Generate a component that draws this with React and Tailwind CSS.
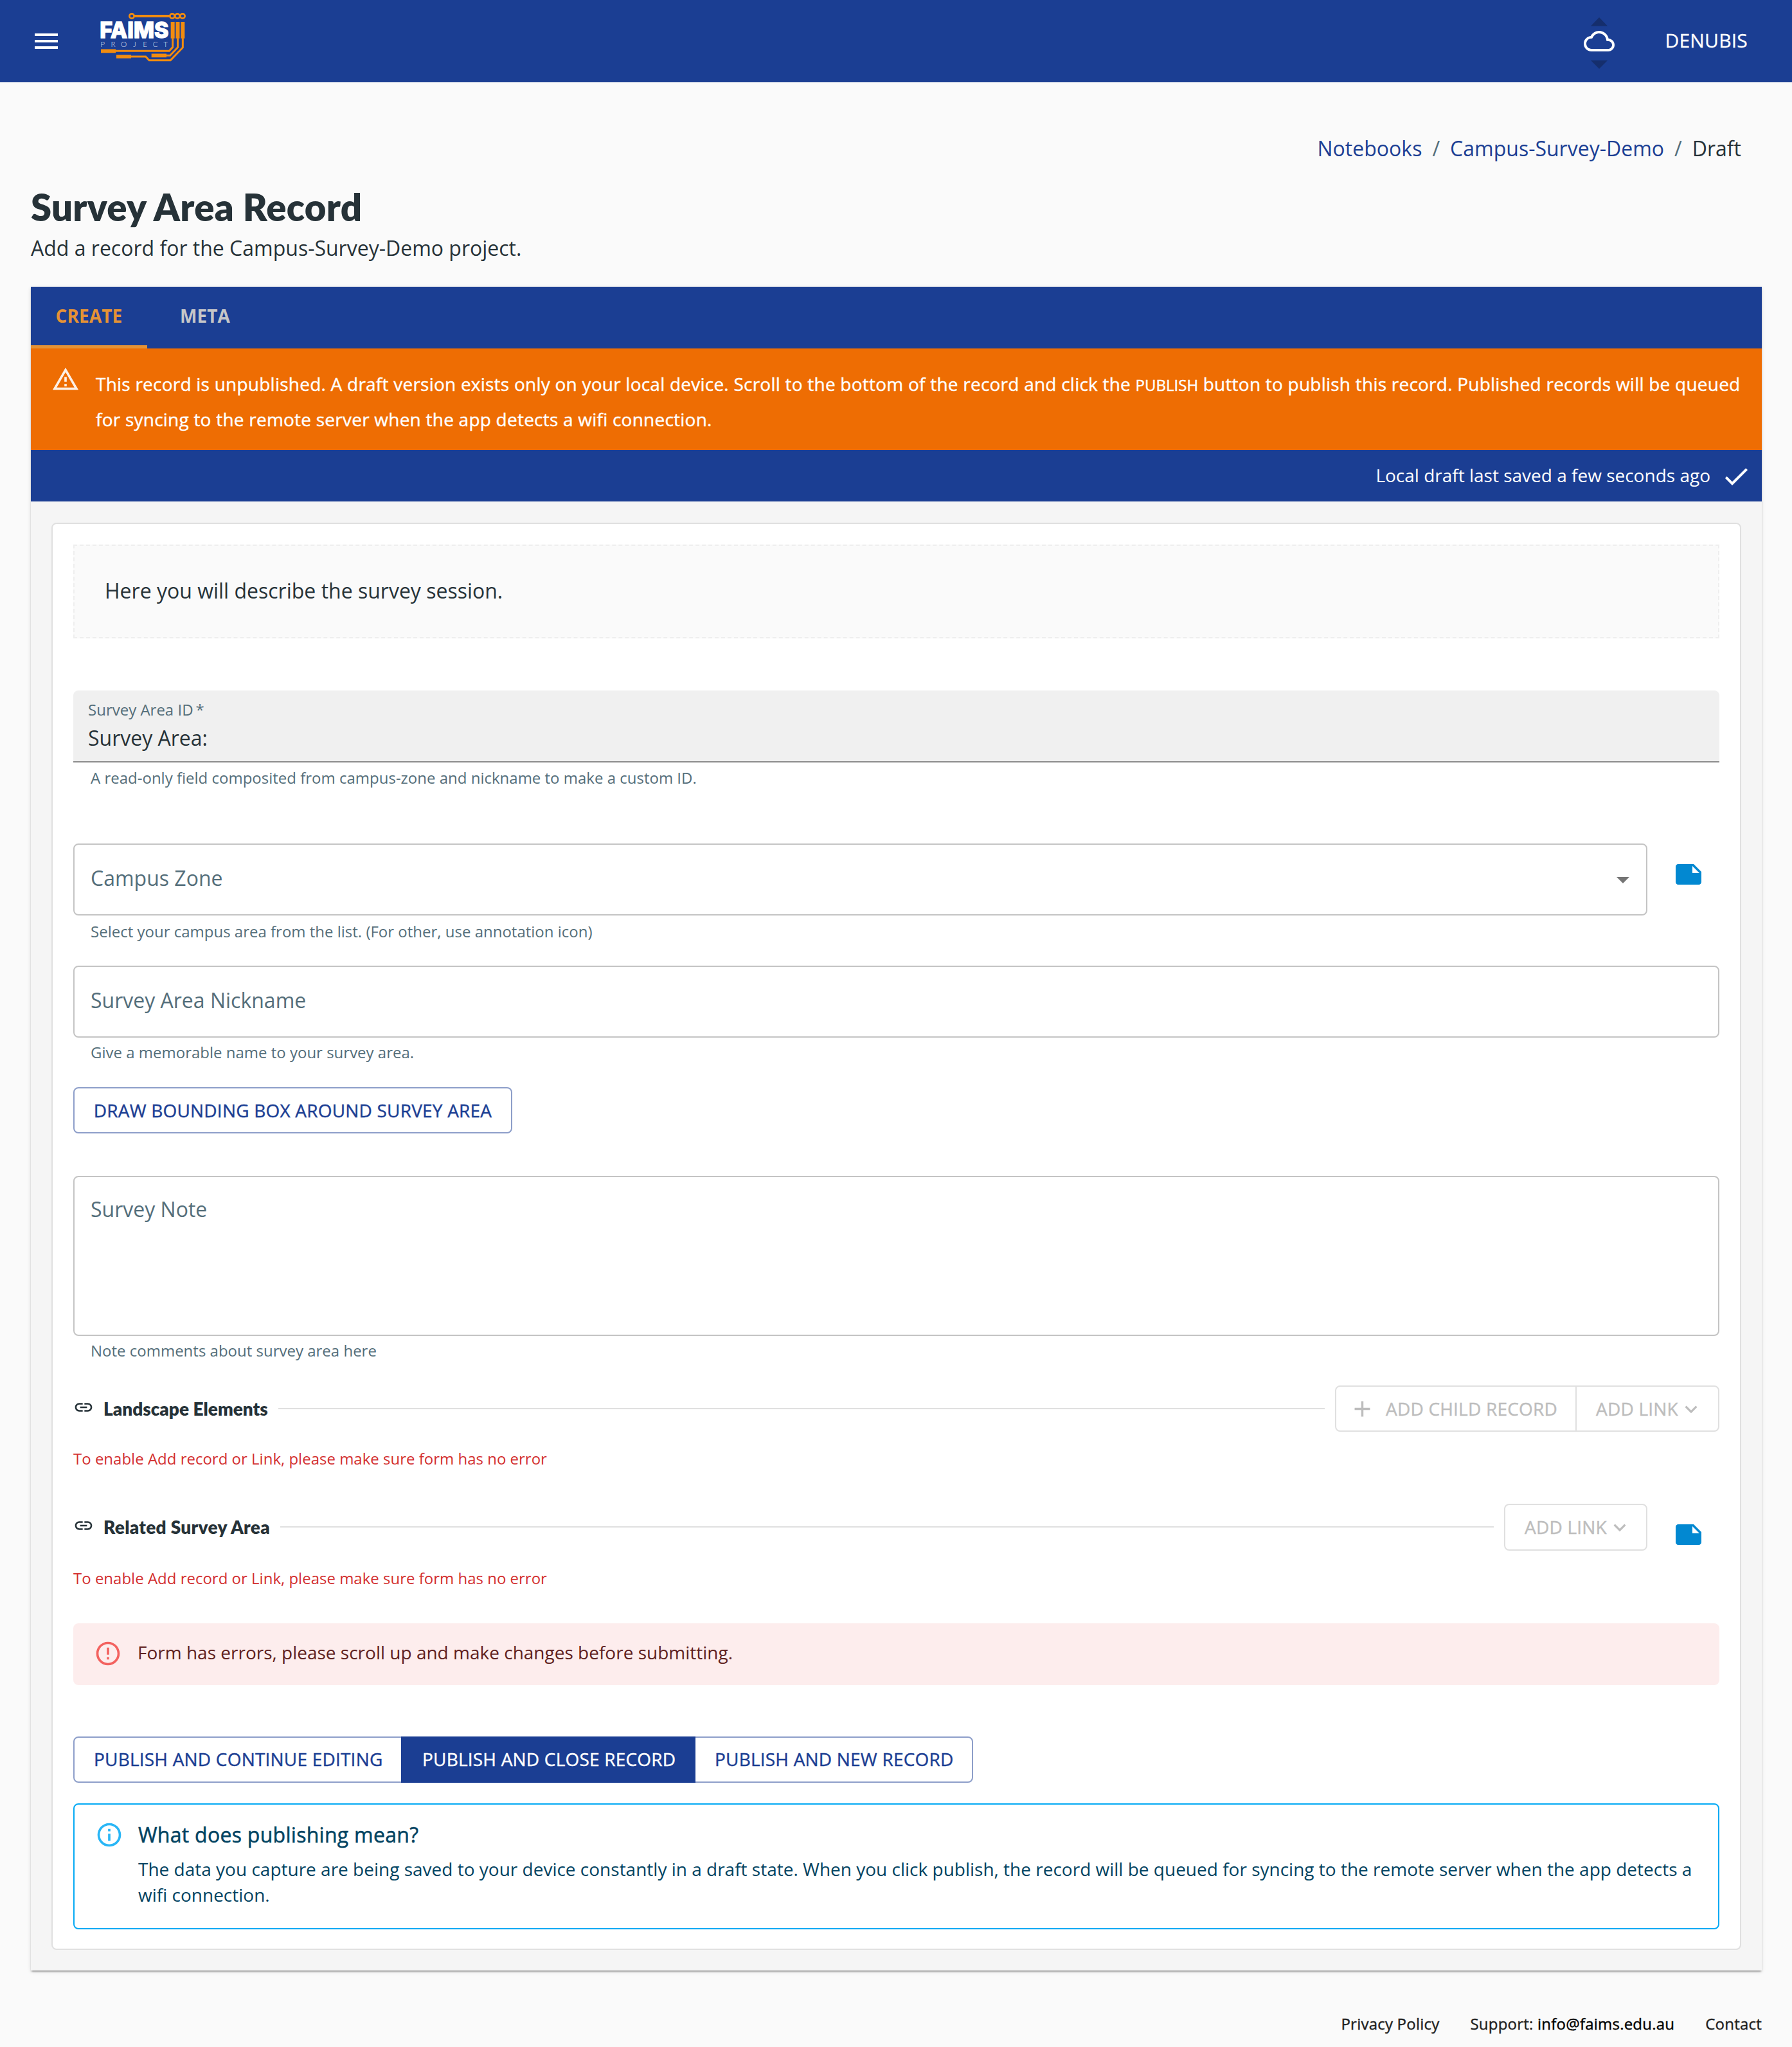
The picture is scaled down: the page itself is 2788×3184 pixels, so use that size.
import React from "react";
import {
  MdMenu,
  MdOutlineReportProblem,
  MdCheck,
  MdNote,
  MdLink,
  MdAdd,
  MdKeyboardArrowDown,
  MdArrowDropDown,
  MdErrorOutline,
  MdInfoOutline,
} from "react-icons/md";

function Logo() {
  return (
    <svg className="block h-[76px] w-[134px]" viewBox="48 30 402 228" fill="none">
      <g stroke="#f28c0f" strokeLinejoin="miter">
        <circle cx="195" cy="45" r="11" strokeWidth="8" />
        <path d="M206 45H373" strokeWidth="12" />
        <circle cx="384" cy="45" r="11" strokeWidth="8" />
        <circle cx="408" cy="45" r="11" strokeWidth="8" />
        <circle cx="432" cy="45" r="11" strokeWidth="8" />
        <path d="M386 72V149M409.5 72V149M433 72V149" strokeWidth="18" />
        <path d="M386 148V190L370 208H119" strokeWidth="9" />
        <path d="M409.5 148V191L374 229H355" strokeWidth="9" />
        <path d="M433 148V192L376 251H276L260 234H190" strokeWidth="9" />
        <path d="M51 208H120M287 229H357M123 234H192" strokeWidth="17" />
      </g>
      <text
        x="46"
        y="148"
        fill="#ffffff"
        stroke="#ffffff"
        strokeWidth="4"
        textLength="321"
        lengthAdjust="spacingAndGlyphs"
        className="font-['Inter'] text-[103px] font-extrabold"
      >
        FAIMS
      </text>
      {["P", "R", "O", "J", "E", "C", "T"].map((letter, i) => (
        <text
          key={letter}
          x={[59, 108, 158, 208, 257, 305, 353][i]}
          y="189"
          fill="#ffffff"
          fillOpacity="0.85"
          textAnchor="middle"
          className="font-['Lato'] text-[35px] font-light"
        >
          {letter}
        </text>
      ))}
    </svg>
  );
}

function SyncStatus() {
  return (
    <svg className="block h-[80px] w-[48px]" viewBox="0 0 48 80">
      <path d="M24 0L37 13.5H11Z" fill="#152e6d" />
      <path d="M24 80L37 67H11Z" fill="#152e6d" />
      <path
        transform="translate(0 13) scale(2)"
        fill="#ffffff"
        d="M19.35 10.04C18.67 6.59 15.64 4 12 4 9.11 4 6.6 5.64 5.35 8.04 2.34 8.36 0 10.91 0 14c0 3.31 2.69 6 6 6h13c2.76 0 5-2.24 5-5 0-2.64-2.05-4.78-4.65-4.96zM19 18H6c-2.21 0-4-1.79-4-4 0-2.05 1.53-3.76 3.56-3.97l1.07-.11.5-.95C8.08 7.14 9.94 6 12 6c2.62 0 4.88 1.86 5.39 4.43l.3 1.5 1.53.11c1.56.1 2.78 1.41 2.78 2.96 0 1.65-1.35 3-3 3z"
      />
    </svg>
  );
}

function Helper({ className, children }) {
  return (
    <p className={`pl-[27px] text-[24px] leading-[40px] text-[#546e7a] ${className}`}>{children}</p>
  );
}

function OutlinedField({ className, children }) {
  return (
    <div
      className={`flex justify-between rounded-[8px] border-2 border-[#c4c4c4] pl-[25px] text-[32px] leading-[46px] text-[#546e7a] ${className}`}
    >
      {children}
    </div>
  );
}

const medium = "[-webkit-text-stroke:0.4px_currentColor] tracking-[0.2px]";

function RelationHeading({ className, children }) {
  return (
    <>
      <MdLink className="mb-[5px] size-[32px] text-[#263238]" />
      <h6
        className={`ml-[15px] mr-[16px] font-['Lato'] text-[28px] font-extrabold leading-[40px] text-[#263238] ${className}`}
      >
        {children}
      </h6>
      <div className="h-[2px] flex-1 bg-[#e0e0e0]" />
    </>
  );
}

function FormError({ className }) {
  return (
    <p className={`text-[24px] leading-[40px] text-[#d32f2f] ${className}`}>
      To enable Add record or Link, please make sure form has no error
    </p>
  );
}

export default function App() {
  return (
    <div className="flex min-h-[3184px] w-[2788px] flex-col bg-[#fafafa] font-['Open_Sans',sans-serif] text-[#263238]">
      <header className="flex h-[128px] items-start bg-[#1b3e93] pl-[48px] pr-[69px] text-white">
        <MdMenu className="mt-[40px] size-[48px]" />
        <div className="ml-[60px] mt-[20px]">
          <Logo />
        </div>
        <div className="ml-auto mt-[27px]">
          <SyncStatus />
        </div>
        <span className="ml-[78px] mt-[38px] text-[30px] leading-[50px] tracking-[0.2px] [-webkit-text-stroke:0.3px_currentColor]">
          DENUBIS
        </span>
      </header>

      <nav className="mt-[79px] flex justify-end pr-[79px] text-[32px] leading-[48px]">
        <a className="text-[#1b3e93]">Notebooks</a>
        <span className="mx-[16px] text-[#546e7a]">/</span>
        <a className="text-[#1b3e93]">Campus-Survey-Demo</a>
        <span className="mx-[16px] text-[#546e7a]">/</span>
        <span>Draft</span>
      </nav>

      <h2 className="mt-[32px] pl-[48px] font-['Lato'] text-[58px] font-extrabold leading-[70px] tracking-[0.3px]">
        Survey Area Record
      </h2>
      <p className="mt-[5px] pl-[48px] text-[32px] leading-[48px]">
        Add a record for the Campus-Survey-Demo project.
      </p>

      <main className="ml-[48px] mr-[47px] mt-[36px] bg-[#f5f5f5] shadow-[0_4px_2px_-2px_rgba(0,0,0,0.2),0_2px_2px_0_rgba(0,0,0,0.14),0_2px_6px_0_rgba(0,0,0,0.12)]">
        <div className="flex h-[96px] bg-[#1b3e93] text-center text-[28px] font-bold leading-[40px] tracking-[0.1px]">
          <div className="w-[181px] border-b-[5px] border-[#e59235] pt-[25px] text-[#e59235]">
            CREATE
          </div>
          <div className="w-[180px] pt-[25px] text-[#c5c6c8]">META</div>
        </div>

        <div className="flex h-[158px] bg-[#ee6d03] pl-[32px] text-white">
          <MdOutlineReportProblem className="mt-[26px] size-[44px] opacity-90" />
          <p className="ml-[25px] mt-[29px] whitespace-nowrap text-[28px] leading-[53.6px] tracking-[0.23px] [-webkit-text-stroke:0.4px_currentColor]">
            This record is unpublished. A draft version exists only on your local device. Scroll to the bottom of the
            record and click the <span className="text-[24px] tracking-[0px]">PUBLISH</span> button to publish this
            record. Published records will be queued
            <br />
            for syncing to the remote server when the app detects a wifi connection.
          </p>
        </div>

        <div className="flex h-[80px] items-start justify-end bg-[#1b3e93] pr-[16px] text-white">
          <span className="mt-[19px] text-[28px] leading-[40px]">Local draft last saved a few seconds ago</span>
          <MdCheck className="ml-[16px] mt-[17px] size-[48px]" />
        </div>

        <div className="px-[32px] pb-[32px] pt-[33px]">
          <section className="h-[2220px] rounded-[8px] border-2 border-[#e0e0e0] bg-white p-[32px]">
            <div className="h-[146px] border-2 border-dashed border-[#eeeeee] bg-[#fafafa] pl-[47px] pt-[46px] text-[32px] leading-[48px]">
              Here you will describe the survey session.
            </div>

            <div className="mt-[81px] h-[112px] rounded-t-[8px] border-b-2 border-[#8c8c8c] bg-[#f0f0f0] pl-[23px]">
              <div className="pt-[10px] text-[24px] leading-[40px] text-[#546e7a]">Survey Area ID&thinsp;*</div>
              <div className="mt-[1px] text-[32px] leading-[46px]">Survey Area:</div>
            </div>
            <Helper className="mt-[4px]">
              A read-only field composited from campus-zone and nickname to make a custom ID.
            </Helper>

            <div className="mt-[82px] flex">
              <OutlinedField className="h-[112px] w-[2449px] pr-[12px] pt-[29px]">
                <span>Campus Zone</span>
                <MdArrowDropDown className="mt-[1px] size-[48px] text-[#757575]" />
              </OutlinedField>
              <MdNote className="ml-[40px] mt-[24px] size-[48px] text-[#0288d1]" />
            </div>
            <Helper className="mt-[5px]">
              Select your campus area from the list. (For other, use annotation icon)
            </Helper>

            <OutlinedField className="mt-[33px] h-[112px] pt-[29px]">Survey Area Nickname</OutlinedField>
            <Helper className="mt-[3px]">Give a memorable name to your survey area.</Helper>

            <button
              className={`mt-[34px] flex h-[72px] w-[683px] items-center justify-center whitespace-nowrap rounded-[8px] border-2 border-[#1b3e93]/50 text-[28px] text-[#1b3e93] ${medium}`}
            >
              DRAW BOUNDING BOX AROUND SURVEY AREA
            </button>

            <OutlinedField className="mt-[66px] h-[249px] pt-[27px]">Survey Note</OutlinedField>
            <Helper className="mt-[3px]">Note comments about survey area here</Helper>

            <div className="mt-[34px] flex h-[72px] items-center">
              <RelationHeading>Landscape Elements</RelationHeading>
              <div
                className={`ml-[16px] flex h-[72px] rounded-[8px] border-2 border-[#e0e0e0] text-[28px] text-[#bdbdbd] ${medium}`}
              >
                <div className="flex w-[374px] items-center border-r-2 border-[#e0e0e0] pl-[20px]">
                  <MdAdd className="size-[41px]" />
                  <span className="ml-[16px] whitespace-nowrap">ADD CHILD RECORD</span>
                </div>
                <div className="flex w-[220px] items-center pl-[30px]">
                  <span className="whitespace-nowrap">ADD LINK</span>
                  <MdKeyboardArrowDown className="ml-px mt-[2px] size-[38px]" />
                </div>
              </div>
            </div>
            <FormError className="mt-[22px]" />

            <div className="mt-[50px] flex h-[72px] items-center">
              <RelationHeading className="tracking-[0.3px]">Related Survey Area</RelationHeading>
              <div
                className={`ml-[16px] flex h-[73px] w-[223px] items-center rounded-[8px] border-2 border-[#e0e0e0] pl-[30px] text-[28px] text-[#bdbdbd] ${medium}`}
              >
                <span className="whitespace-nowrap">ADD LINK</span>
                <MdKeyboardArrowDown className="ml-px mt-[2px] size-[38px]" />
              </div>
              <MdNote className="ml-[40px] mr-[24px] mt-[24px] size-[48px] text-[#0288d1]" />
            </div>
            <FormError className="mt-[24px]" />

            <div className="mt-[50px] flex h-[96px] rounded-[8px] bg-[#fdeded] pl-[32px] text-[28px] leading-[40px] text-[#5f2120]">
              <MdErrorOutline className="mt-[25px] size-[44px] text-[#f3625f]" />
              <span className="ml-[24px] mt-[25px]">
                Form has errors, please scroll up and make changes before submitting.
              </span>
            </div>

            <div
              className={`mt-[80px] flex h-[72px] w-[1400px] whitespace-nowrap rounded-[8px] border-2 border-[#1b3e93]/50 text-[28px] leading-[66px] text-[#1b3e93] ${medium}`}
            >
              <span className="w-[508px] pl-[30px]">PUBLISH AND CONTINUE EDITING</span>
              <span className="-my-[2px] w-[458px] bg-[#1b3e93] pl-[33px] leading-[70px] text-white">
                PUBLISH AND CLOSE RECORD
              </span>
              <span className="pl-[30px]">PUBLISH AND NEW RECORD</span>
            </div>

            <div className="mt-[32px] flex h-[196px] rounded-[8px] border-2 border-[#03a9f4] pl-[32px] text-[#014361]">
              <MdInfoOutline className="mt-[25px] size-[44px] text-[#29b6f6]" />
              <div className="ml-[23px] whitespace-nowrap">
                <div className="mt-[23px] text-[32px] leading-[48px] tracking-[0.28px] [-webkit-text-stroke:0.5px_currentColor]">
                  What does publishing mean?
                </div>
                <p className="mt-[9px] text-[28px] leading-[40px]">
                  The data you capture are being saved to your device constantly in a draft state. When you click
                  publish, the record will be queued for syncing to the remote server when the app detects a<br />
                  wifi connection.
                </p>
              </div>
            </div>
          </section>
        </div>
      </main>

      <footer className="mt-[67px] flex justify-end gap-[48px] pr-[47px] text-[24px] leading-[32px] tracking-[0.22px] text-[#1f1f1f] [-webkit-text-stroke:0.4px_currentColor]">
        <span>Privacy Policy</span>
        <span>
          Support: <a className="text-black">info@faims.edu.au</a>
        </span>
        <span>Contact</span>
      </footer>
    </div>
  );
}
